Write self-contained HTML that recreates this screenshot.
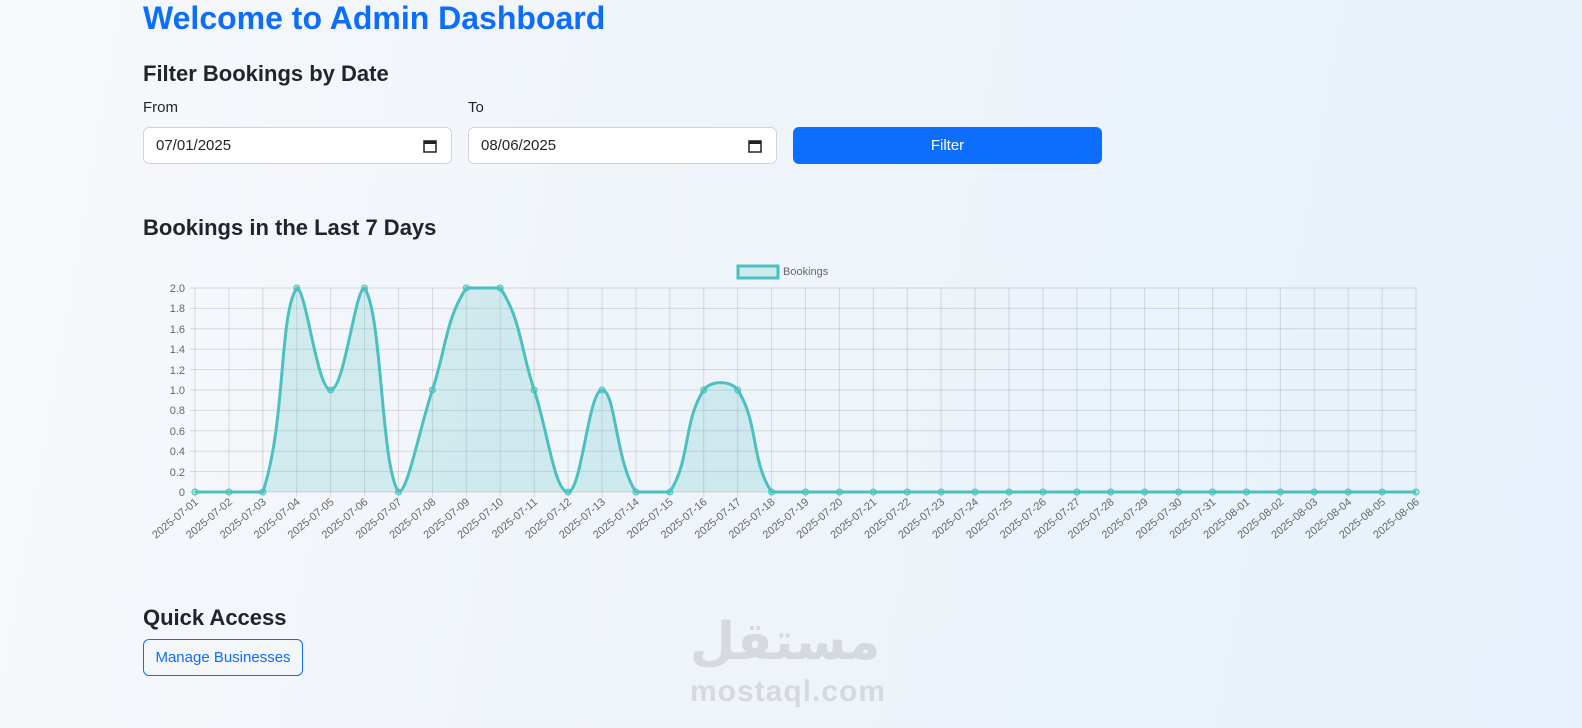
<!DOCTYPE html><html><head><meta charset="utf-8"><style>
body{margin:0;width:1582px;height:728px;overflow:hidden;font-family:"Liberation Sans",sans-serif;background:linear-gradient(100deg,#f7f8fb 0%,#eef4fa 50%,#e6f1fb 100%);position:relative;color:#212529}
h1{position:absolute;left:143px;top:0;margin:0;font-size:32px;color:#0d6efd;font-weight:bold;line-height:36px}
h2{position:absolute;left:143px;margin:0;font-size:22px;font-weight:bold}
.lab{position:absolute;font-size:15px;top:99px}
.inp{position:absolute;top:127px;width:309px;height:37px;border:1px solid #ced4da;border-radius:6px;background:#fff;box-sizing:border-box;font-size:15px;padding:9px 12px}
.inp svg{position:absolute;right:14px;top:11px}
.btn{position:absolute;left:793px;top:127px;width:309px;height:37px;background:#0d6efd;border-radius:6px;color:#fff;font-size:15px;text-align:center;line-height:37px}
.mb{position:absolute;left:143px;top:639px;width:160px;height:37px;border:1px solid #0d6efd;border-radius:6px;color:#0d6efd;font-size:15px;text-align:center;line-height:36px;box-sizing:border-box}
.wm{position:absolute;left:690px;top:675px;font-size:30px;color:#d6d9dd;font-weight:bold;letter-spacing:1px}
.wa{position:absolute;left:690px;top:612px;font-size:52px;color:#d6d9dd;font-weight:bold;font-family:"Liberation Sans","DejaVu Sans",sans-serif}
</style></head><body>
<h1>Welcome to Admin Dashboard</h1>
<h2 style="top:61px">Filter Bookings by Date</h2>
<div class="lab" style="left:143px">From</div><div class="lab" style="left:468px">To</div>
<div class="inp" style="left:143px">07/01/2025<svg width="14" height="14" viewBox="0 0 14 14"><rect x="1" y="2" width="12" height="11" fill="none" stroke="#222" stroke-width="1.5"/><rect x="1" y="2" width="12" height="3" fill="#222"/></svg></div>
<div class="inp" style="left:468px">08/06/2025<svg width="14" height="14" viewBox="0 0 14 14"><rect x="1" y="2" width="12" height="11" fill="none" stroke="#222" stroke-width="1.5"/><rect x="1" y="2" width="12" height="3" fill="#222"/></svg></div>
<div class="btn">Filter</div>
<h2 style="top:215px">Bookings in the Last 7 Days</h2>
<svg id="ch" style="position:absolute;left:0;top:0" width="1582" height="580" font-family="Liberation Sans,sans-serif" font-size="11" fill="#666">
<rect x="738" y="266" width="40" height="12" fill="rgba(75,192,192,0.2)" stroke="#4bc0c0" stroke-width="3"/>
<text x="783" y="275">Bookings</text>
<g id="grid" stroke="rgba(0,0,0,0.12)" stroke-width="1"></g>
<g text-anchor="end">
<text x="185" y="292">2.0</text><text x="185" y="312">1.8</text><text x="185" y="333">1.6</text><text x="185" y="353">1.4</text><text x="185" y="374">1.2</text><text x="185" y="394">1.0</text><text x="185" y="414">0.8</text><text x="185" y="435">0.6</text><text x="185" y="455">0.4</text><text x="185" y="476">0.2</text><text x="185" y="496">0</text>
</g>
<path id="area" fill="rgba(75,192,192,0.2)"/>
<path id="line" fill="none" stroke="#4bc0c0" stroke-width="3"/>
<g id="pts" fill="rgba(75,192,192,0.3)" stroke="#4bc0c0" stroke-width="1"></g>
<g id="xl" text-anchor="end">
<text>2025-07-01</text><text>2025-07-02</text><text>2025-07-03</text><text>2025-07-04</text><text>2025-07-05</text><text>2025-07-06</text><text>2025-07-07</text><text>2025-07-08</text><text>2025-07-09</text><text>2025-07-10</text><text>2025-07-11</text><text>2025-07-12</text><text>2025-07-13</text><text>2025-07-14</text><text>2025-07-15</text><text>2025-07-16</text><text>2025-07-17</text><text>2025-07-18</text><text>2025-07-19</text><text>2025-07-20</text><text>2025-07-21</text><text>2025-07-22</text><text>2025-07-23</text><text>2025-07-24</text><text>2025-07-25</text><text>2025-07-26</text><text>2025-07-27</text><text>2025-07-28</text><text>2025-07-29</text><text>2025-07-30</text><text>2025-07-31</text><text>2025-08-01</text><text>2025-08-02</text><text>2025-08-03</text><text>2025-08-04</text><text>2025-08-05</text><text>2025-08-06</text>
</g>
</svg>
<h2 style="top:605px">Quick Access</h2>
<div class="mb">Manage Businesses</div>
<div class="wa">مستقل</div>
<div class="wm">mostaql.com</div>
<script>
var d=[0,0,0,2,1,2,0,1,2,2,1,0,1,0,0,1,1,0];while(d.length<37)d.push(0);
var x0=195,st=1221/36,y0=492,ys=102;
var X=i=>x0+i*st,Y=v=>y0-v*ys;
var g='';for(var i=0;i<37;i++)g+='<line x1="'+X(i)+'" y1="288" x2="'+X(i)+'" y2="497"/>';
for(var k=0;k<=10;k++){var y=y0-k*20.4;g+='<line x1="190" y1="'+y+'" x2="1416" y2="'+y+'"/>';}
document.getElementById('grid').innerHTML=g;
var P=d.map((v,i)=>({x:X(i),y:Y(v)})),t=0.4,cp=[];
for(var i=0;i<37;i++){var a=P[Math.max(i-1,0)],c=P[i],b=P[Math.min(i+1,36)];
var d01=Math.hypot(c.x-a.x,c.y-a.y),d12=Math.hypot(b.x-c.x,b.y-c.y);
var s=d01+d12,fa=s?t*d01/s:0,fb=s?t*d12/s:0;
cp.push({px:c.x-fa*(b.x-a.x),py:c.y-fa*(b.y-a.y),nx:c.x+fb*(b.x-a.x),ny:c.y+fb*(b.y-a.y)});}
var cl=v=>Math.min(Math.max(v,288),492);
var p='M'+P[0].x+','+P[0].y;
for(var i=0;i<36;i++)p+=' C'+cp[i].nx+','+cl(cp[i].ny)+' '+cp[i+1].px+','+cl(cp[i+1].py)+' '+P[i+1].x+','+P[i+1].y;
document.getElementById('line').setAttribute('d',p);
document.getElementById('area').setAttribute('d',p+' L'+X(36)+',492 L'+X(0)+',492Z');
var s='';for(var i=0;i<37;i++)s+='<circle cx="'+X(i)+'" cy="'+Y(d[i])+'" r="3"/>';
document.getElementById('pts').innerHTML=s;
var ts=document.querySelectorAll('#xl text');ts.forEach((e,i)=>e.setAttribute('transform','translate('+(X(i)+4)+',503) rotate(-40)'));
</script>
</body></html>
